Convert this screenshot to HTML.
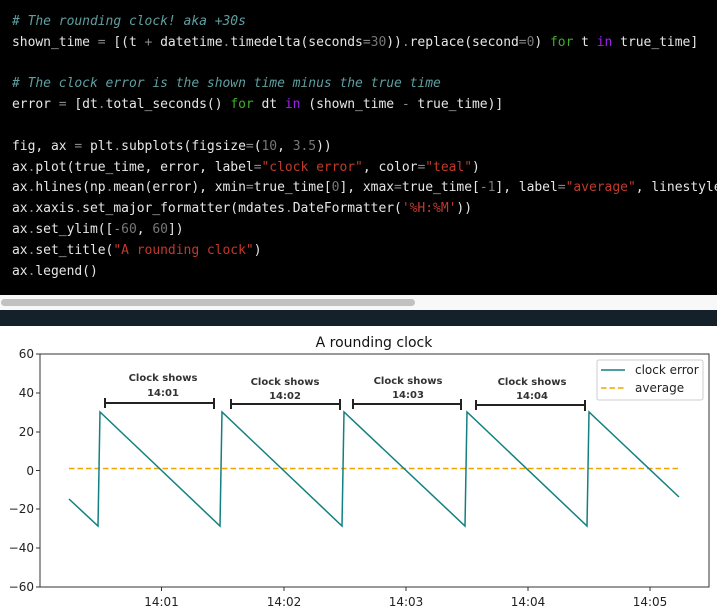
<!DOCTYPE html>
<html><head><style>
body{margin:0;width:717px;height:612px;overflow:hidden;background:#fff;position:relative}
#code{position:absolute;left:0;top:0;width:717px;height:295px;background:#000;}
pre{margin:0;position:absolute;left:12px;top:12px;font-family:"DejaVu Sans Mono","Liberation Mono",monospace;font-size:13px;line-height:20.8px;color:#e6e6e6;white-space:pre;letter-spacing:-0.03px}
.c{color:#5f9ea0;font-style:italic}.k{color:#3fae2b}.i{color:#a020f0}.s{color:#c0392b}.n{color:#777}.o{color:#888}
</style></head><body>
<div id="code"><pre><span class="c"># The rounding clock! aka +30s</span>
shown_time <span class="o">=</span> [(t <span class="o">+</span> datetime<span class="o">.</span>timedelta(seconds<span class="o">=</span><span class="n">30</span>))<span class="o">.</span>replace(second<span class="o">=</span><span class="n">0</span>) <span class="k">for</span> t <span class="i">in</span> true_time]

<span class="c"># The clock error is the shown time minus the true time</span>
error <span class="o">=</span> [dt<span class="o">.</span>total_seconds() <span class="k">for</span> dt <span class="i">in</span> (shown_time <span class="o">-</span> true_time)]

fig, ax <span class="o">=</span> plt<span class="o">.</span>subplots(figsize<span class="o">=</span>(<span class="n">10</span>, <span class="n">3.5</span>))
ax<span class="o">.</span>plot(true_time, error, label<span class="o">=</span><span class="s">"clock error"</span>, color<span class="o">=</span><span class="s">"teal"</span>)
ax<span class="o">.</span>hlines(np<span class="o">.</span>mean(error), xmin<span class="o">=</span>true_time[<span class="n">0</span>], xmax<span class="o">=</span>true_time[<span class="o">-</span><span class="n">1</span>], label<span class="o">=</span><span class="s">"average"</span>, linestyle
ax<span class="o">.</span>xaxis<span class="o">.</span>set_major_formatter(mdates<span class="o">.</span>DateFormatter(<span class="s">'%H:%M'</span>))
ax<span class="o">.</span>set_ylim([<span class="o">-</span><span class="n">60</span>, <span class="n">60</span>])
ax<span class="o">.</span>set_title(<span class="s">"A rounding clock"</span>)
ax<span class="o">.</span>legend()</pre></div>
<div style="position:absolute;left:0;top:295px;width:717px;height:15px;background:#f8f8f8"></div>
<div style="position:absolute;left:1px;top:299px;width:414px;height:7px;background:#c1c1c1;border-radius:4px"></div>
<div style="position:absolute;left:0;top:310px;width:717px;height:16px;background:#15212a"></div>
<svg style="position:absolute;left:0;top:0" width="717" height="612" font-family="DejaVu Sans, Liberation Sans, sans-serif">
<text x="374" y="347" font-size="14" text-anchor="middle" fill="#111">A rounding clock</text>
<rect x="40" y="354" width="669" height="233" fill="none" stroke="#333" stroke-width="1"/>
<g font-size="12" fill="#222" text-anchor="end">
<text x="34" y="358">60</text><text x="34" y="397">40</text><text x="34" y="436">20</text><text x="34" y="475">0</text><text x="34" y="513">−20</text><text x="34" y="552">−40</text><text x="34" y="591">−60</text></g>
<g stroke="#333"><line x1="36" y1="354" x2="40" y2="354"/><line x1="36" y1="393" x2="40" y2="393"/><line x1="36" y1="432" x2="40" y2="432"/><line x1="36" y1="470.5" x2="40" y2="470.5"/><line x1="36" y1="509" x2="40" y2="509"/><line x1="36" y1="548" x2="40" y2="548"/><line x1="36" y1="587" x2="40" y2="587"/>
<line x1="161.5" y1="587" x2="161.5" y2="591"/><line x1="284" y1="587" x2="284" y2="591"/><line x1="406" y1="587" x2="406" y2="591"/><line x1="528" y1="587" x2="528" y2="591"/><line x1="650" y1="587" x2="650" y2="591"/></g>
<g font-size="12" fill="#222" text-anchor="middle"><text x="161.5" y="606">14:01</text><text x="284" y="606">14:02</text><text x="406" y="606">14:03</text><text x="528" y="606">14:04</text><text x="650" y="606">14:05</text></g>
<line x1="69" y1="468.5" x2="679" y2="468.5" stroke="#f0a500" stroke-width="1.5" stroke-dasharray="5.5,3"/>
<polyline fill="none" stroke="#138080" stroke-width="1.5" points="69,499 98,526 100,412 220,526 222,412 342,526 344,412 465,526 467,412 587,526 589,412 679,497"/>
<g stroke="#222" stroke-width="2"><path d="M105,403H214M105,398V408M214,398V409"/><path d="M231,404H340M231,399V409M340,399V410"/><path d="M353,404H461M353,399V409M461,399V410"/><path d="M476,405H585M476,400V410M585,400V411"/></g>
<g font-size="10" font-weight="bold" fill="#333" text-anchor="middle"><text x="163" y="381">Clock shows</text><text x="163" y="396">14:01</text><text x="285" y="385">Clock shows</text><text x="285" y="399">14:02</text><text x="408" y="384">Clock shows</text><text x="408" y="398">14:03</text><text x="532" y="385">Clock shows</text><text x="532" y="399">14:04</text></g>
<rect x="597" y="360" width="106" height="40" rx="2" fill="#fff" stroke="#ccc"/>
<line x1="601" y1="370" x2="625" y2="370" stroke="#138080" stroke-width="1.5"/>
<line x1="601" y1="388" x2="625" y2="388" stroke="#f0a500" stroke-width="1.5" stroke-dasharray="5.5,3"/>
<g font-size="12" fill="#222"><text x="635" y="374">clock error</text><text x="635" y="392">average</text></g>
</svg>
</body></html>
